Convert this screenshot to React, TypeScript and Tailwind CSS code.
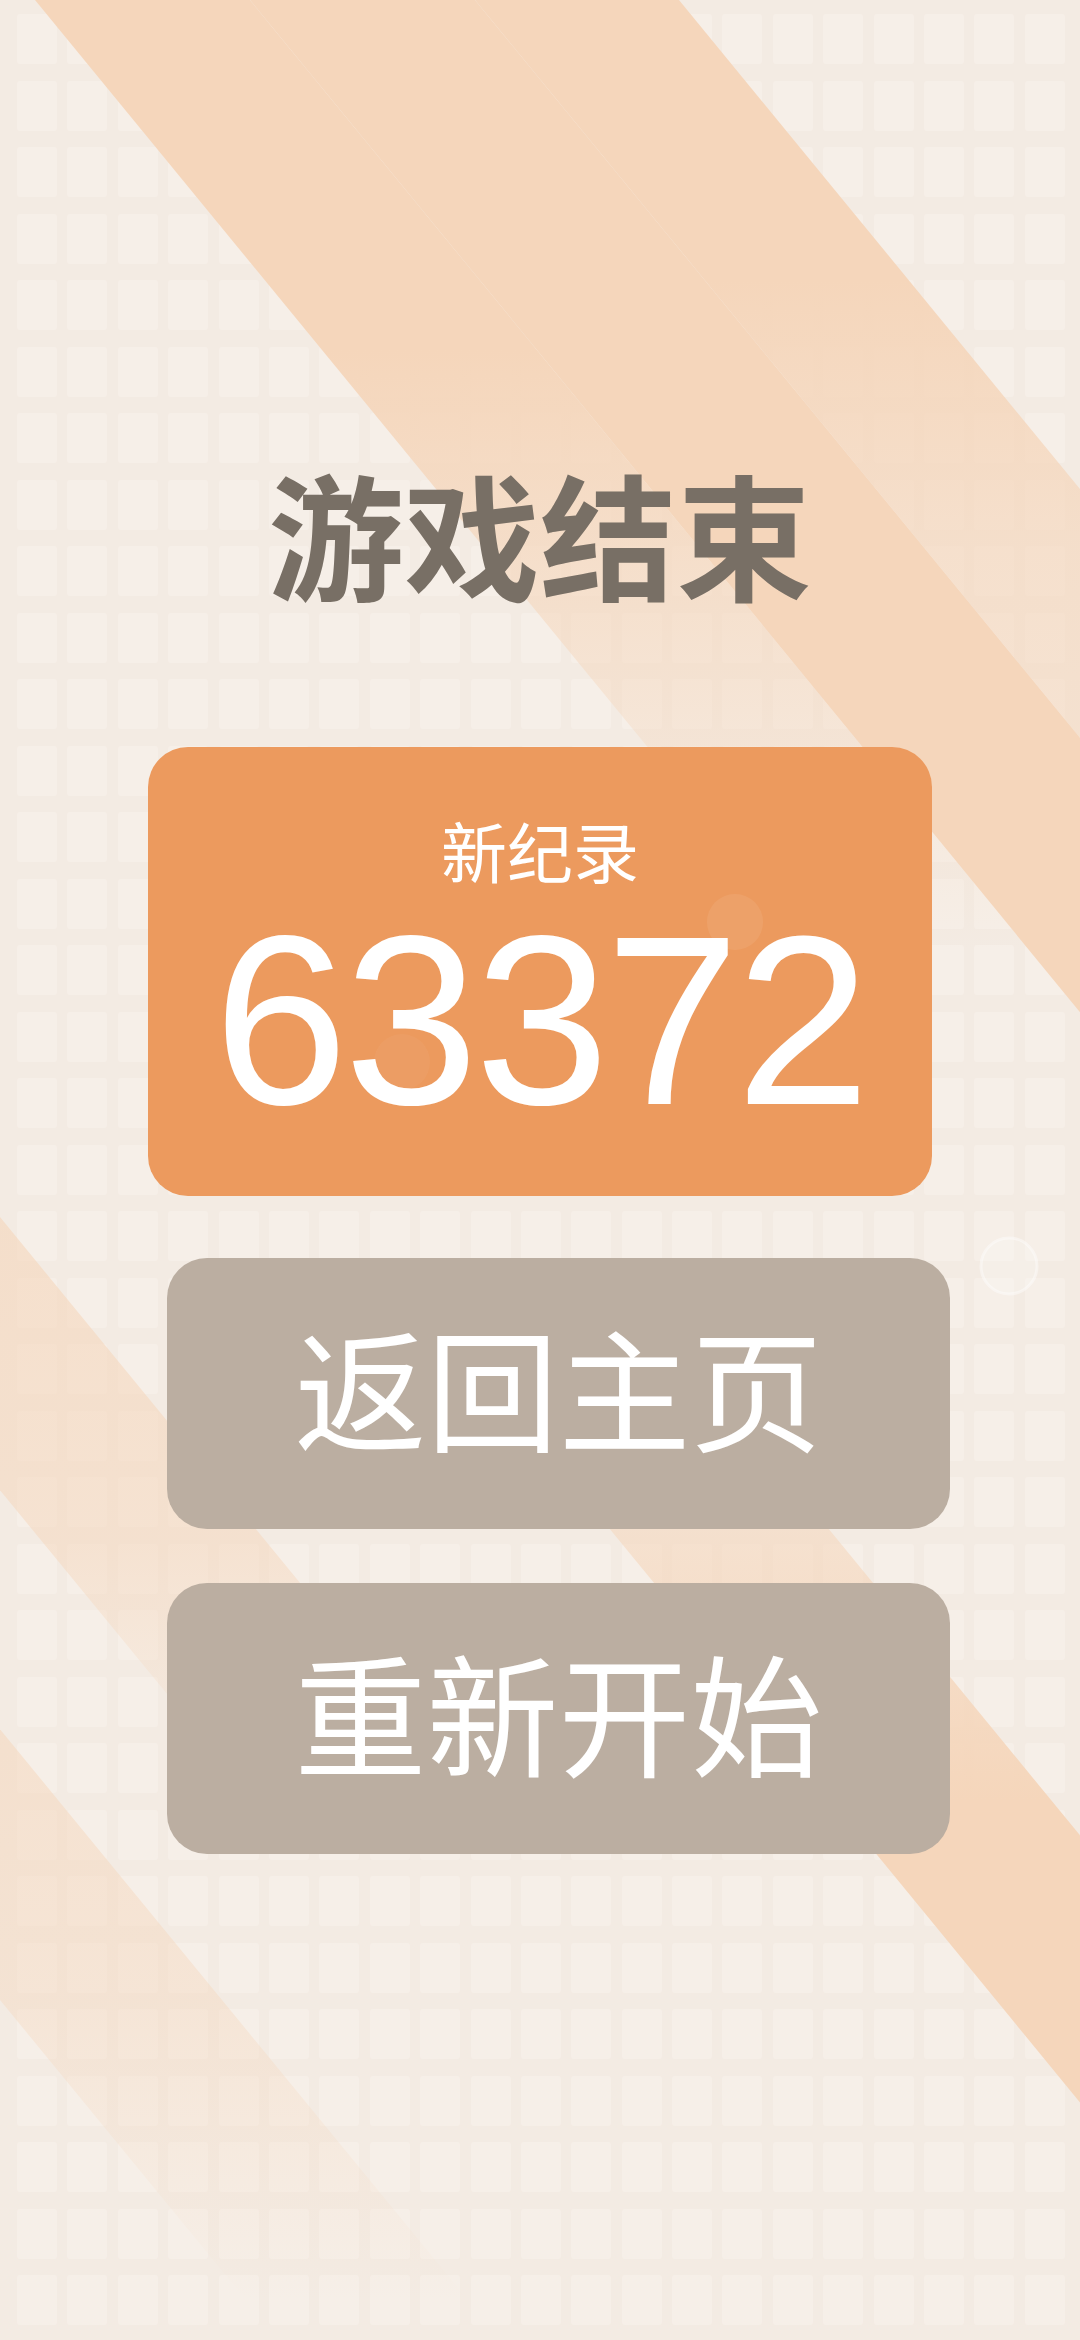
import React from 'react';

// diagonal bands: x = c + K * y, c ranges taken along the top edge
const K = 0.82;
const H = 2340;

const band = (c1: number, c2: number) =>
  `${c1},0 ${c2},0 ${c2 + K * H},${H} ${c1 + K * H},${H}`;

type Stop = [number, number];

interface Band {
  id: string;
  c: [number, number];
  stops: Stop[]; // [y, opacity]
}

const BANDS: Band[] = [
  { id: 'a1', c: [35, 250], stops: [[0, 1], [350, 1], [650, 0.5], [950, 0]] },
  { id: 'a2', c: [475, 679], stops: [[0, 1], [280, 1], [550, 0.6], [800, 0.45], [1100, 0.4]] },
  { id: 'b', c: [250, 475], stops: [[0, 1], [1100, 1]] },
  { id: 'c', c: [-1222, -998], stops: [[1200, 0.62], [1550, 0.5], [1800, 0]] },
  { id: 'e', c: [-1640, -1418], stops: [[1700, 0.55], [2000, 0.4], [2300, 0]] },
  { id: 'd', c: [-644, -425], stops: [[1300, 0], [1480, 0.45], [1800, 1], [2340, 1]] },
];

const PEACH = '#f5d6bb';

const Backdrop: React.FC = () => (
  <div className="absolute inset-0 pointer-events-none">
    <div className="absolute inset-0 grid grid-cols-[repeat(21,40px)] auto-rows-[50px] gap-x-[10.4px] gap-y-[16.5px] pl-[17px] pt-[14px] content-start">
      {Array.from({ length: 21 * 35 }).map((_, i) => (
        <div key={i} className="bg-[#f6efe8] rounded-[3px]" />
      ))}
    </div>
    <svg className="absolute inset-0" width={1080} height={2340} viewBox="0 0 1080 2340">
      <defs>
        {BANDS.map(b => (
          <linearGradient key={b.id} id={`fade-${b.id}`} gradientUnits="userSpaceOnUse" x1="0" y1="0" x2="0" y2={H}>
            {b.stops.map(([y, o], i) => (
              <stop key={i} offset={y / H} stopColor={PEACH} stopOpacity={o} />
            ))}
          </linearGradient>
        ))}
      </defs>
      {BANDS.map(b => (
        <polygon key={b.id} points={band(b.c[0], b.c[1])} fill={`url(#fade-${b.id})`} />
      ))}
      <circle cx={1009} cy={1266} r={28} fill="#ffffff" fillOpacity={0.2} stroke="#ffffff" strokeOpacity={0.4} strokeWidth={3} />
    </svg>
  </div>
);

const ActionButton: React.FC<{ label: string; className?: string }> = ({ label, className = '' }) => (
  <button
    className={`ml-[37px] w-[783px] h-[271px] rounded-[40px] bg-[#bbaea1] text-white text-[132px] leading-none flex items-center justify-center pb-[18px] ${className}`}
  >
    {label}
  </button>
);

export default function App() {
  return (
    <div className="relative w-[1080px] h-[2340px] overflow-hidden bg-[#f3ebe3] font-['Noto_Sans_CJK_SC','Noto_Sans',sans-serif]">
      <Backdrop />

      <main className="relative flex flex-col items-center pt-[464px]">
        <h1 className="text-[136px] leading-none font-bold text-[#786f65]">游戏结束</h1>

        <section className="relative mt-[147px] w-[784px] h-[449px] rounded-[40px] bg-[#ec9a5e] flex flex-col items-center pt-[69px] overflow-hidden">
          <span className="absolute left-[559px] top-[147px] w-[56px] h-[56px] rounded-full bg-white/[0.07]" />
          <span className="absolute left-[226px] top-[287px] w-[56px] h-[56px] rounded-full bg-white/[0.04]" />
          <p className="relative text-[66px] leading-none text-white">新纪录</p>
          <p className="relative mt-[17px] text-[242px] leading-none tracking-[-4px] text-white font-['Liberation_Sans',sans-serif]">
            63372
          </p>
        </section>

        <ActionButton label="返回主页" className="mt-[62px]" />
        <ActionButton label="重新开始" className="mt-[54px]" />
      </main>
    </div>
  );
}
